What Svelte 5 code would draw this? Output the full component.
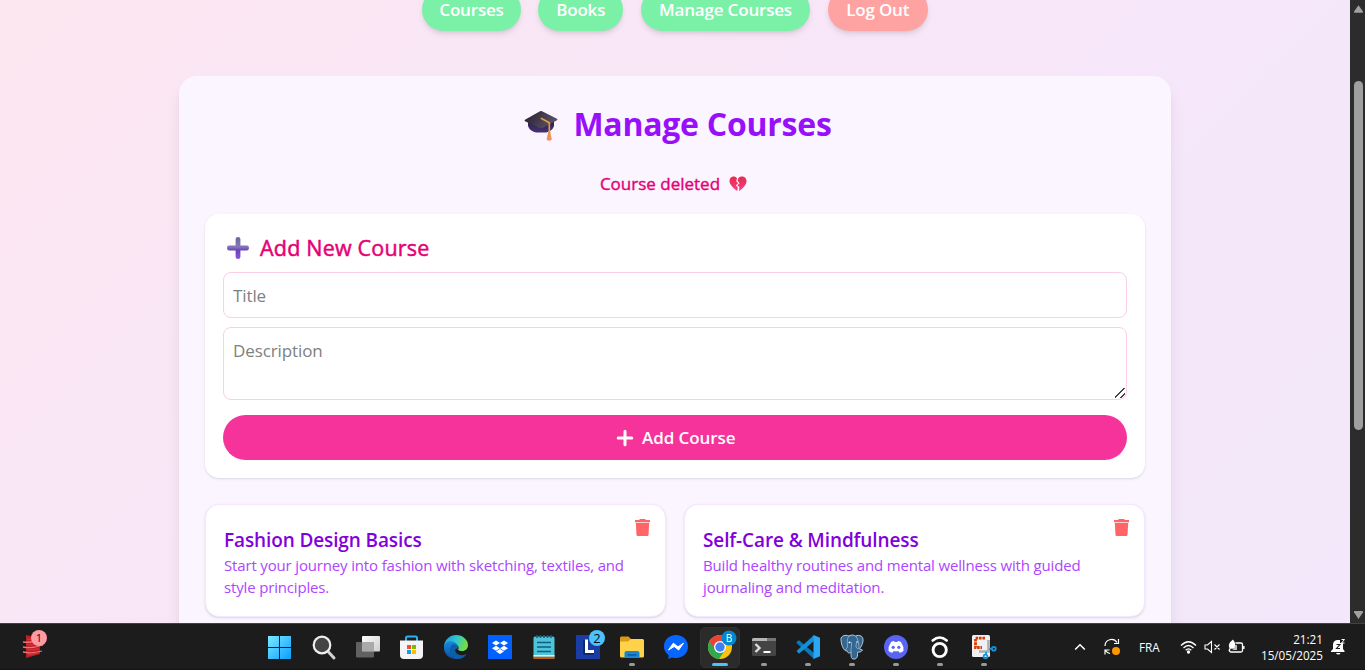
<script>
  const nav = [
    { label: 'Courses', w: 98.5 },
    { label: 'Books', w: 85 },
    { label: 'Manage Courses', w: 169.5 },
    { label: 'Log Out', w: 100, out: true }
  ];
  const courses = [
    { title: 'Fashion Design Basics', lines: ['Start your journey into fashion with sketching, textiles, and', 'style principles.'] },
    { title: 'Self-Care & Mindfulness', lines: ['Build healthy routines and mental wellness with guided', 'journaling and meditation.'] }
  ];
  const apps = [
    'windows', 'search', 'tasks', 'store', 'edge', 'dropbox', 'notes', 'letter', 'files',
    'messenger', 'chrome', 'terminal', 'code', 'postgres', 'discord', 'ring', 'snip'
  ];
  const running = ['files', 'terminal', 'code', 'postgres', 'discord', 'ring', 'snip'];
</script>

<div class="screen">
  <div class="browser">
    <main>
      <nav>
        {#each nav as n}
          <button class:out={n.out} style="width:{n.w}px">{n.label}</button>
        {/each}
      </nav>
      <section class="panel">
        <h1>
          <svg width="34" height="34" viewBox="0 0 34 34">
            <defs>
              <linearGradient id="cap" x1="0" y1="0" x2="1" y2="0.4"><stop offset="0" stop-color="#251f2c" /><stop offset="1" stop-color="#5a5068" /></linearGradient>
              <linearGradient id="base" x1="0" y1="0" x2="0" y2="1"><stop offset="0" stop-color="#2b2140" /><stop offset="1" stop-color="#47307a" /></linearGradient>
              <linearGradient id="tas" x1="0" y1="0" x2="0" y2="1"><stop offset="0" stop-color="#d99a3c" /><stop offset="1" stop-color="#ff8a6c" /></linearGradient>
            </defs>
            <path d="M4 13h26v4c0 3-3 6.500-8 7.500H12C7 23.500 4 20 4 17z" fill="url(#base)" />
            <path d="M16 3.300q1-.4 2 0l15 7.500q1 .7 0 1.400L18.500 20q-1.500.7-3 0L1 13.200q-1-.7 0-1.400z" fill="url(#cap)" />
            <path d="M17.500 10.500l7.800 4.300v10" fill="none" stroke="#d9a03c" stroke-width="1.700" stroke-linecap="round" stroke-linejoin="round" />
            <path d="M24.200 24h2l1.600 7.500q-2.500 2.600-5.200 0z" fill="url(#tas)" />
          </svg>
          <span>Manage Courses</span>
        </h1>
        <p class="message">
          <span>Course deleted</span>
          <svg width="18" height="16" viewBox="0 0 18 16">
            <defs><linearGradient id="hrt" x1="0" y1="0" x2="0" y2="1"><stop offset="0" stop-color="#e32b4b" /><stop offset="1" stop-color="#fb3f86" /></linearGradient></defs>
            <path d="M8 2.200C6-.4 1-.1.500 4.500c-.3 4 4 7.700 7.800 10.500l.5-3.500-2-2.200 2.400-2-2-2z" fill="url(#hrt)" />
            <path d="M9.200 2.500C11.200-.4 17-.2 17.500 4.500c.3 4-3.300 7.700-7.500 10.500l.4-4-2-1.800 2.200-2-2-2.400z" fill="url(#hrt)" />
          </svg>
        </p>
        <form class="add" onsubmit={(e) => e.preventDefault()}>
          <h2>
            <svg width="24" height="24" viewBox="0 0 24 24">
              <defs><linearGradient id="pls" x1="0" y1="0" x2="0" y2="1"><stop offset="0" stop-color="#6f64a0" /><stop offset=".45" stop-color="#8577b8" /><stop offset=".6" stop-color="#6b41bb" /><stop offset="1" stop-color="#8a57dc" /></linearGradient></defs>
              <path d="M12 1q2.400 0 2.400 2v6.600H21q2 0 2 2.400t-2 2.400h-6.600V21q0 2-2.400 2t-2.400-2v-6.600H3q-2 0-2-2.400t2-2.400h6.600V3q0-2 2.400-2z" fill="url(#pls)" />
            </svg>
            <span>Add New Course</span>
          </h2>
          <input placeholder="Title" />
          <textarea placeholder="Description"></textarea>
          <button>
            <svg width="16" height="16" viewBox="0 0 16 16"><path d="M8 1.200v13.600M1.200 8h13.600" stroke="#fff" stroke-width="3" stroke-linecap="round" /></svg>
            <span>Add Course</span>
          </button>
        </form>
        <div class="list">
          {#each courses as c}
            <article>
              <div>
                <h3>{c.title}</h3>
                {#each c.lines as line}<p>{line}</p>{/each}
              </div>
              <svg width="15" height="18" viewBox="0 0 15 18" fill="#ff6467">
                <path d="M4.500 1V0h6v1H15v2H0V1z" /><path d="M0 3h15v1.200H.500z" opacity=".3" />
                <path d="M.8 4h13.400l-.7 11.800q-.1 1.200-1.300 1.200H2.800q-1.200 0-1.300-1.200z" />
              </svg>
            </article>
          {/each}
        </div>
      </section>
    </main>
    <aside class="scroll">
      <svg width="15" height="16" viewBox="0 0 15 16"><path d="M8.500 5.200L13 11.500q.3 1-.8 1.200H4.700Q3.500 12.500 4 11.500z" fill="#a0a0a0" /></svg>
      <div class="track"><i></i></div>
      <svg width="15" height="16" viewBox="0 0 15 16"><path d="M8.500 12L13 5.200q.3-1-.8-1.200H4.700Q3.500 4.200 4 5.200z" fill="#a0a0a0" /></svg>
    </aside>
  </div>

  <footer>
    <div class="widget">
      <svg width="30" height="32" viewBox="0 0 30 32">
        <path d="M6 7l14 3v16L6 30z" fill="#b91f24" />
        <path d="M3 14q9 1 20-2M3 19q8 2 20-2M3 24q9 2 19-1" stroke="#eb7479" stroke-width="1.300" fill="none" />
        <path d="M7 11q7 1 12-1M7 16.500q7 1 12-1M7 21.500q7 1 12-1M8 27l10-2" stroke="#d52f34" stroke-width="1.500" fill="none" />
        <circle cx="19" cy="10" r="8" fill="#ff99a4" />
        <text x="19" y="14" text-anchor="middle" font-size="11" fill="#111">1</text>
      </svg>
    </div>
    <div class="apps">
      {#each apps as a}
        <div class="app" class:active={a === 'chrome'}>
          <svg width="32" height="32" viewBox="-4 -4 32 32">
            {#if a === 'windows'}
              <defs><linearGradient id="win" gradientUnits="userSpaceOnUse" x1="0" y1="0" x2="24" y2="24"><stop stop-color="#7cecff" /><stop offset="1" stop-color="#0a9bff" /></linearGradient></defs>
              <path d="M0 1h11v11H0zM12 1h11v11H12zM0 13h11v11H0zM12 13h11v11H12z" fill="url(#win)" />
            {:else if a === 'search'}
              <path d="M16.500 17l5.500 6" stroke="#cfd3d9" stroke-width="3" stroke-linecap="round" />
              <circle cx="10" cy="10" r="8.300" fill="#444" stroke="#eee" stroke-width="2.200" />
            {:else if a === 'tasks'}
              <defs><linearGradient id="tv" x2="1" y2="1"><stop stop-color="#fff" /><stop offset="1" stop-color="#ccc" /></linearGradient></defs>
              <rect x="6" y="1" width="18" height="15.500" rx="1" fill="url(#tv)" /><rect x="0" y="7" width="18" height="15.500" rx="1" fill="#6d6d6d" opacity=".85" /><path d="M6 7h12v9.500H6z" fill="#aaa" />
            {:else if a === 'store'}
              <path d="M6 6V3q0-1.500 1.500-1.500h8Q17 1.500 17 3v3" fill="none" stroke="#28b4f0" stroke-width="2" />
              <path d="M0 5.500h23V20q0 4-4 4H4q-4 0-4-4z" fill="#f4f4f6" />
              <path d="M7 10h4v4H7z" fill="#f25022" /><path d="M12 10h4v4h-4z" fill="#7fba00" /><path d="M7 15h4v4H7z" fill="#00a4ef" /><path d="M12 15h4v4h-4z" fill="#ffb900" />
            {:else if a === 'edge'}
              <defs><linearGradient id="ed" x2="1" y2=".3"><stop stop-color="#2493df" /><stop offset=".55" stop-color="#2fc7cf" /><stop offset="1" stop-color="#73dc45" /></linearGradient><linearGradient id="eb" x2="0" y2="1"><stop stop-color="#168adb" /><stop offset="1" stop-color="#0b4f9f" /></linearGradient></defs>
              <path d="M0 11C1 4 6 0 12 0c7 0 12 5 12 10 0 4-3 6.300-6.500 6.300-4 0-4.500-1.500-4-2.200 2-2.500 0-5-3-5.200C7 8.700 4 9 0 13z" fill="url(#ed)" />
              <path d="M0 12C1 7.500 5 5.500 9 6.700c4 1 5.500 4 4.500 7-4-1-4.500 4.500.5 6.800 3 1.300 6 .8 8.500-1.500C20 23 16 24 12 24 5 24-.5 18.500 0 12z" fill="url(#eb)" />
              <path d="M9 9c-5 4-4 11 3 15 5 0 9-2 10.500-5-8 4-15-3-9-7-1-2-2.500-3-4.500-3z" fill="#0c5eaa" />
              <path d="M13.500 13.600q1.200-1 .8-2.600 1 2-.2 3.500.6 1.800 4 1.800 3 0 4.700-1.800-1 4-5.800 3.500-4.500-.5-3.500-4.400z" fill="#1c1c1c" />
            {:else if a === 'dropbox'}
              <path d="M0 0h24v24H0z" fill="#0061ff" /><path d="M8 5.500l4 2.500-4 2.500L4 8zm8 0L20 8l-4 2.500L12 8zM8 10.700l4 2.500-4 2.500-4-2.500zm8 0l4 2.500-4 2.500-4-2.500zM12 14l4 2.500-4 2.500-4-2.500z" fill="#fff" />
            {:else if a === 'notes'}
              <path d="M4 1.500h18q1.500 0 1.500 1.500v20h-21V3Q2.500 1.500 4 1.500z" transform="translate(-1 0)" fill="#4ec3dc" /><path d="M1.500 21.500h21V24h-21z" fill="#b85d13" /><path d="M1.500 20h21v1.500h-21z" fill="#d7f4fb" />
              <path d="M5 0v3M8.500 0v3M12 0v3M15.500 0v3M19 0v3M5 7.500h14M5 12h14M5 16.500h14" stroke="#125d78" stroke-width="1.500" />
            {:else if a === 'letter'}
              <path d="M0 0h24v24H0z" fill="#1b3ca5" /><path d="M9 5v13h9" fill="none" stroke="#0b2767" stroke-width="3.500" /><path d="M10.500 4.500v12h7.500" fill="none" stroke="#fff" stroke-width="3" />
              <circle cx="21" cy="3" r="8" fill="#4cc2ff" /><text x="21" y="7.700" text-anchor="middle" font-size="13" fill="#111">2</text>
            {:else if a === 'files'}
              <path d="M0 3q0-1.500 1.500-1.500h7L11 4v5H0z" fill="#d99a16" /><path d="M0 6.500h8L11 4h11.500Q24 4 24 5.500V21q0 1.500-1.500 1.500h-21Q0 22.500 0 21z" fill="#ffd24a" />
              <path d="M4.500 22.500V18q0-2 2-2h11q2 0 2 2v4.500z" fill="#1687d3" /><path d="M8 20h8" stroke="#0c5b99" stroke-width="1.500" stroke-linecap="round" />
            {:else if a === 'messenger'}
              <path d="M12 0c7 0 12 5 12 11.500S19 23 12 23q-2 0-4-.5L4.500 24v-4C1.500 18 0 15 0 11.500 0 5 5 0 12 0z" fill="#0866ff" /><path d="M4.500 15L9.300 8.200l4.700 3.600 5.500-3.600-4.800 6.800-4.500-3.500z" fill="#fff" stroke="#fff" stroke-linejoin="round" />
            {:else if a === 'chrome'}
              <circle cx="12" cy="12" r="12" fill="#fbc116" /><path d="M1.600 6A12 12 0 0 0 11 24l6-9-10-3z" fill="#2da94f" /><path d="M1.600 6A12 12 0 0 1 22.400 6H12L6.800 15z" fill="#ea4335" />
              <circle cx="12" cy="12" r="6" fill="#fff" /><circle cx="12" cy="12" r="4.700" fill="#3f7ff1" />
              <circle cx="21" cy="3" r="7.500" fill="#0288d1" /><text x="21" y="6.500" text-anchor="middle" font-size="10" fill="#fff">B</text>
            {:else if a === 'terminal'}
              <rect x="0" y="3" width="24" height="18" rx="1.500" fill="#444" /><path d="M1.500 3h21Q24 3 24 4.500V6H0V4.500Q0 3 1.500 3z" fill="#b5b5b5" /><path d="M15 3h9v3h-9z" fill="#777" />
              <path d="M3.500 9l4 4-4 4" fill="none" stroke="#ddd" stroke-width="2.400" /><path d="M11.500 17h7" stroke="#fff" stroke-width="2" />
            {:else if a === 'code'}
              <path d="M1 6.500l2-1.300L18 18v6L.5 8z" fill="#0878bd" /><path d="M.5 16L18 0v6L3 18.800z" fill="#1590d4" /><path d="M17.500 0L24 2.800v18.400L17.500 24z" fill="#29a7f2" />
            {:else if a === 'postgres'}
              <path d="M1 3C3-.5 7 .2 9 1c3-1.500 5-1 6.500 0 4-1.500 8-.3 7.500 5-.3 3-2 6-3.500 8l3 1q-1 2.500-5 2.200c.4 4-.5 7-3.500 6.800-3.500.3-3-4-3-7-1.500 2-3.500 1-3.500-1C3 17 .5 7 1 3z" fill="#336791" stroke="#b8c8d8" stroke-width="1" />
              <path d="M9 1C6.500 4 7.500 8 7.500 12l-2 3M15.500 1c2.500 3 3.500 7 3.500 12-2 2-4-1-2.500-5M8 7.500q2-1 3.500 0c.5 4-1 6-.5 9.500" stroke="#9fb6cb" stroke-width=".8" fill="none" /><circle cx="9.500" cy="7.500" r=".8" fill="#fff" /><circle cx="17" cy="7" r=".8" fill="#fff" />
            {:else if a === 'discord'}
              <circle cx="12" cy="12" r="12" fill="#5865f2" /><path d="M7 7q2-1 3-1l.7 1h2.600l.7-1q1 0 3 1 3 4.500 2.500 9-2 1.500-4 1.800l-.8-1.500H9.300l-.8 1.500q-2-.3-4-1.800Q4 11.500 7 7z" fill="#fff" /><circle cx="9.200" cy="12.300" r="1.600" fill="#5865f2" /><circle cx="14.800" cy="12.300" r="1.600" fill="#5865f2" />
            {:else if a === 'ring'}
              <circle cx="11.700" cy="15" r="6.600" fill="none" stroke="#fff" stroke-width="2.900" /><path d="M4.700 5.500q7-6 14 0" fill="none" stroke="#fff" stroke-width="2.600" stroke-linecap="round" />
            {:else}
              <rect x="0" y="0" width="18" height="22" rx="1.500" fill="#f0f0f2" /><path d="M13 3.200H3.500v9.300H10" fill="none" stroke="#d83b01" stroke-width="2.800" stroke-dasharray="2.600 .8" />
              <path d="M16.500 5v11.500H7" fill="none" stroke="#a9aeb3" stroke-width="2.600" /><circle cx="13.500" cy="21.500" r="1.900" fill="none" stroke="#1494df" stroke-width="1.800" /><circle cx="21.800" cy="13.700" r="1.900" fill="none" stroke="#1494df" stroke-width="1.800" /><path d="M13.500 19.500l1-2.500M17 14.500l2.500-.8" stroke="#1494df" stroke-width="1.800" />
            {/if}
          </svg>
          {#if a === 'chrome'}<i class="bar"></i>{:else if running.includes(a)}<i></i>{/if}
        </div>
      {/each}
    </div>
    <div class="tray">
      <svg width="12" height="12" viewBox="0 0 12 12"><path d="M1.200 8.500L6 3.800l4.800 4.700" fill="none" stroke="#fff" stroke-width="1.600" /></svg>
      <svg class="sync" width="18" height="18" viewBox="0 0 18 18"><path d="M2 8a6.500 6.500 0 0 1 12-3.500M15.500 1v4.500H11M2 16.500V12h4.500M2.500 12.500Q4 15 7 15.500" fill="none" stroke="#fff" stroke-width="1.200" /><circle cx="13" cy="13" r="4" fill="#ff9800" /></svg>
      <span class="lang">FRA</span>
      <svg class="wifi" width="17" height="14" viewBox="0 0 17 14" fill="none" stroke="#fff" stroke-width="1.300"><path d="M1 5.500q7.500-7.500 15 0M3.500 8q5-5 10 0M5.700 10.300q2.800-2.800 5.600 0" /><circle cx="8.500" cy="12" r="1" fill="#fff" /></svg>
      <svg class="mute" width="17" height="14" viewBox="0 0 17 14" fill="none" stroke="#fff" stroke-width="1.100"><path d="M1 5h2.500L7.500 1.500v11L3.500 9H1zM10.500 4.500l5 5M15.500 4.500l-5 5" /></svg>
      <svg class="battery" width="18" height="14" viewBox="0 0 18 14"><path d="M7.500 3H13q1.500 0 1.500 1.500v6q0 1.500-1.500 1.500H3q-1.500 0-1.500-1.500V9.500M15.900 6v3" fill="none" stroke="#fff" stroke-width="1.300" /><path d="M7.500 5H9v5H4.500z" fill="#bbb" /><path d="M5-.5Q8.500 4 6.500 7.500 5 9.500 3 8.500L1 11 .5 10.300 1.500 8.500Q-1 4 5-.5z" fill="#fff" /></svg>
      <div class="clock"><span>21:21</span><span>15/05/2025</span></div>
      <svg class="bell" width="15" height="17" viewBox="0 0 15 17"><path d="M2 6.500Q2.300 2 7 2h2v3h3v6l1.500 2v1H0v-1l2-2z" fill="#fff" /><path d="M5 15h4.500q-.5 1.500-2.200 1.500T5 15z" fill="#fff" /><path d="M10.500 1.500h3l-3 3.500h3" stroke="#fff" fill="none" /><path d="M5.500 6.500h3.500L5.500 10.500H9" fill="none" stroke="#1c1c1c" stroke-width="1.100" /></svg>
    </div>
  </footer>
</div>

<style>
  :global(body) { margin: 0; overflow: hidden; }
  .screen { width: 1365px; height: 670px; display: flex; flex-direction: column; overflow: hidden; font-family: "Open Sans", "Noto Sans", sans-serif; }
  .screen :is(h1, h2, h3, p) { margin: 0; }
  svg { flex: none; display: block; overflow: visible; }
  span, p, h3 { white-space: nowrap; }
  .browser { height: 623px; display: flex; overflow: hidden; }
  main { width: 1350px; height: 623px; overflow: hidden; display: flex; flex-direction: column; align-items: center; background: linear-gradient(135deg, #fce7f0 5%, #f9e6f6 31%, #f5e7fa 61%, #f3e7fb 87%) 0 -116px / 1350px 1055px no-repeat; }
  nav { display: flex; gap: 17.500px; margin-top: -12px; height: 43px; flex: none; }
  nav button { height: 43px; padding: 0; border: 0; border-radius: 22px; background: #7bf1a8; color: #fff; font: 600 17px "Open Sans", sans-serif; letter-spacing: -.18px; box-shadow: 0 4px 6px -1px #0000001a, 0 2px 4px -2px #0000001a; }
  nav button.out { background: #ffa2a2; }
  .panel { box-sizing: border-box; width: 992px; height: 700px; flex: none; margin-top: 45px; padding: 0 26px; background: #faf5ff; border-radius: 18px; box-shadow: 0 11px 17px -3px #0000001a, 0 4px 7px -4px #0000001a; }
  h1 { box-sizing: border-box; height: 97px; display: flex; align-items: center; justify-content: center; gap: 15px; padding-left: 6px; color: #9810fa; font-size: 32px; line-height: 40px; font-weight: 700; letter-spacing: -.25px; }
  h1 span { padding-bottom: 2px; }
  .message { height: 22px; display: flex; align-items: center; justify-content: center; gap: 9px; padding-right: 3px; color: #e60076; font-size: 17px; -webkit-text-stroke: .4px #e60076; }
  .message span { padding-bottom: 2px; }
  .add { box-sizing: border-box; height: 264px; margin-top: 19px; padding: 18px; display: flex; flex-direction: column; border-radius: 14px; background: #fff; box-shadow: 0 1px 3px #0000001a, 0 1px 2px -1px #0000001a; }
  h2 { height: 32px; display: flex; align-items: center; gap: 10px; padding-left: 3px; color: #e60076; font-size: 21.500px; font-weight: 400; letter-spacing: .2px; -webkit-text-stroke: .5px #e60076; }
  h2 span { padding-bottom: 2px; }
  input, textarea { box-sizing: border-box; width: 100%; margin: 8px 0 0; padding: 0 9px; border: 1px solid #fccee8; border-radius: 8px; outline: 0; background: #fff; font: 400 17px/26px "Open Sans", sans-serif; letter-spacing: -.1px; flex: none; }
  input { height: 46px; }
  textarea { height: 73px; margin-top: 9px; padding-top: 10px; resize: vertical; }
  textarea::-webkit-resizer { background: linear-gradient(135deg, transparent 44%, #444 45% 54%, transparent 55% 70%, #444 71% 80%, transparent 81%) 4px 4px / 10px 10px no-repeat; }
  input::placeholder, textarea::placeholder { color: #808080; }
  .add button { height: 45px; margin-top: 15px; padding: 0 5px 0 7px; border: 0; border-radius: 23px; background: #f6339a; color: #fff; display: flex; align-items: center; justify-content: center; gap: 9.500px; font: 600 17px "Open Sans", sans-serif; letter-spacing: -.08px; flex: none; }
  .list { display: grid; grid-template-columns: 1fr 1fr; gap: 18px; margin-top: 26px; }
  article { box-sizing: border-box; height: 113px; display: flex; justify-content: space-between; padding: 14px 15px 0 18px; border: 1px solid #f3e8ff; border-radius: 14px; background: #fff; box-shadow: 0 1px 3px #0000001a, 0 1px 2px -1px #0000001a; }
  article div { width: 0; padding-top: 8px; }
  h3 { color: #8200db; font-size: 19px; line-height: 27px; font-weight: 600; letter-spacing: -.12px; }
  article p { color: #ad46ff; font-size: 15px; line-height: 22px; letter-spacing: -.16px; }
  .scroll { width: 15px; background: #2c2c2c; display: flex; flex-direction: column; }
  .track { height: 591px; padding: 65px 0 0 4px; box-sizing: border-box; }
  .track i { display: block; width: 9px; height: 349px; border-radius: 5px; background: #9f9f9f; }
  footer { box-sizing: border-box; height: 47px; display: grid; grid-template-columns: 258px 748px 1fr; background: #1c1c1c; border-top: 1px solid #444047; border-bottom: 1px solid #141414; color: #fff; }
  .widget { padding: 4px 0 0 20px; }
  .apps { display: flex; }
  .app { box-sizing: border-box; width: 40px; height: 41px; margin: 3px 2px 0; border: 1px solid transparent; border-radius: 5px; display: flex; flex-direction: column; align-items: center; padding-top: 3px; }
  .app.active { background: #2b2b2b; border-color: #303030; }
  .app i { width: 6px; height: 3px; border-radius: 2px; background: #999; }
  .app i.bar { width: 16px; background: #4cc2ff; }
  .tray { display: flex; align-items: center; padding-left: 68px; }
  .sync { margin-left: 17px; }
  .lang { margin-left: 18px; width: 22px; font-size: 11.700px; }
  .wifi { margin-left: 19px; }
  .mute { margin-left: 7px; }
  .battery { margin-left: 7px; }
  .clock { margin-left: 14px; width: 63px; display: flex; flex-direction: column; align-items: flex-end; font-size: 11.700px; line-height: 16px; letter-spacing: 0; }
  .bell { margin-left: 8px; }
</style>
